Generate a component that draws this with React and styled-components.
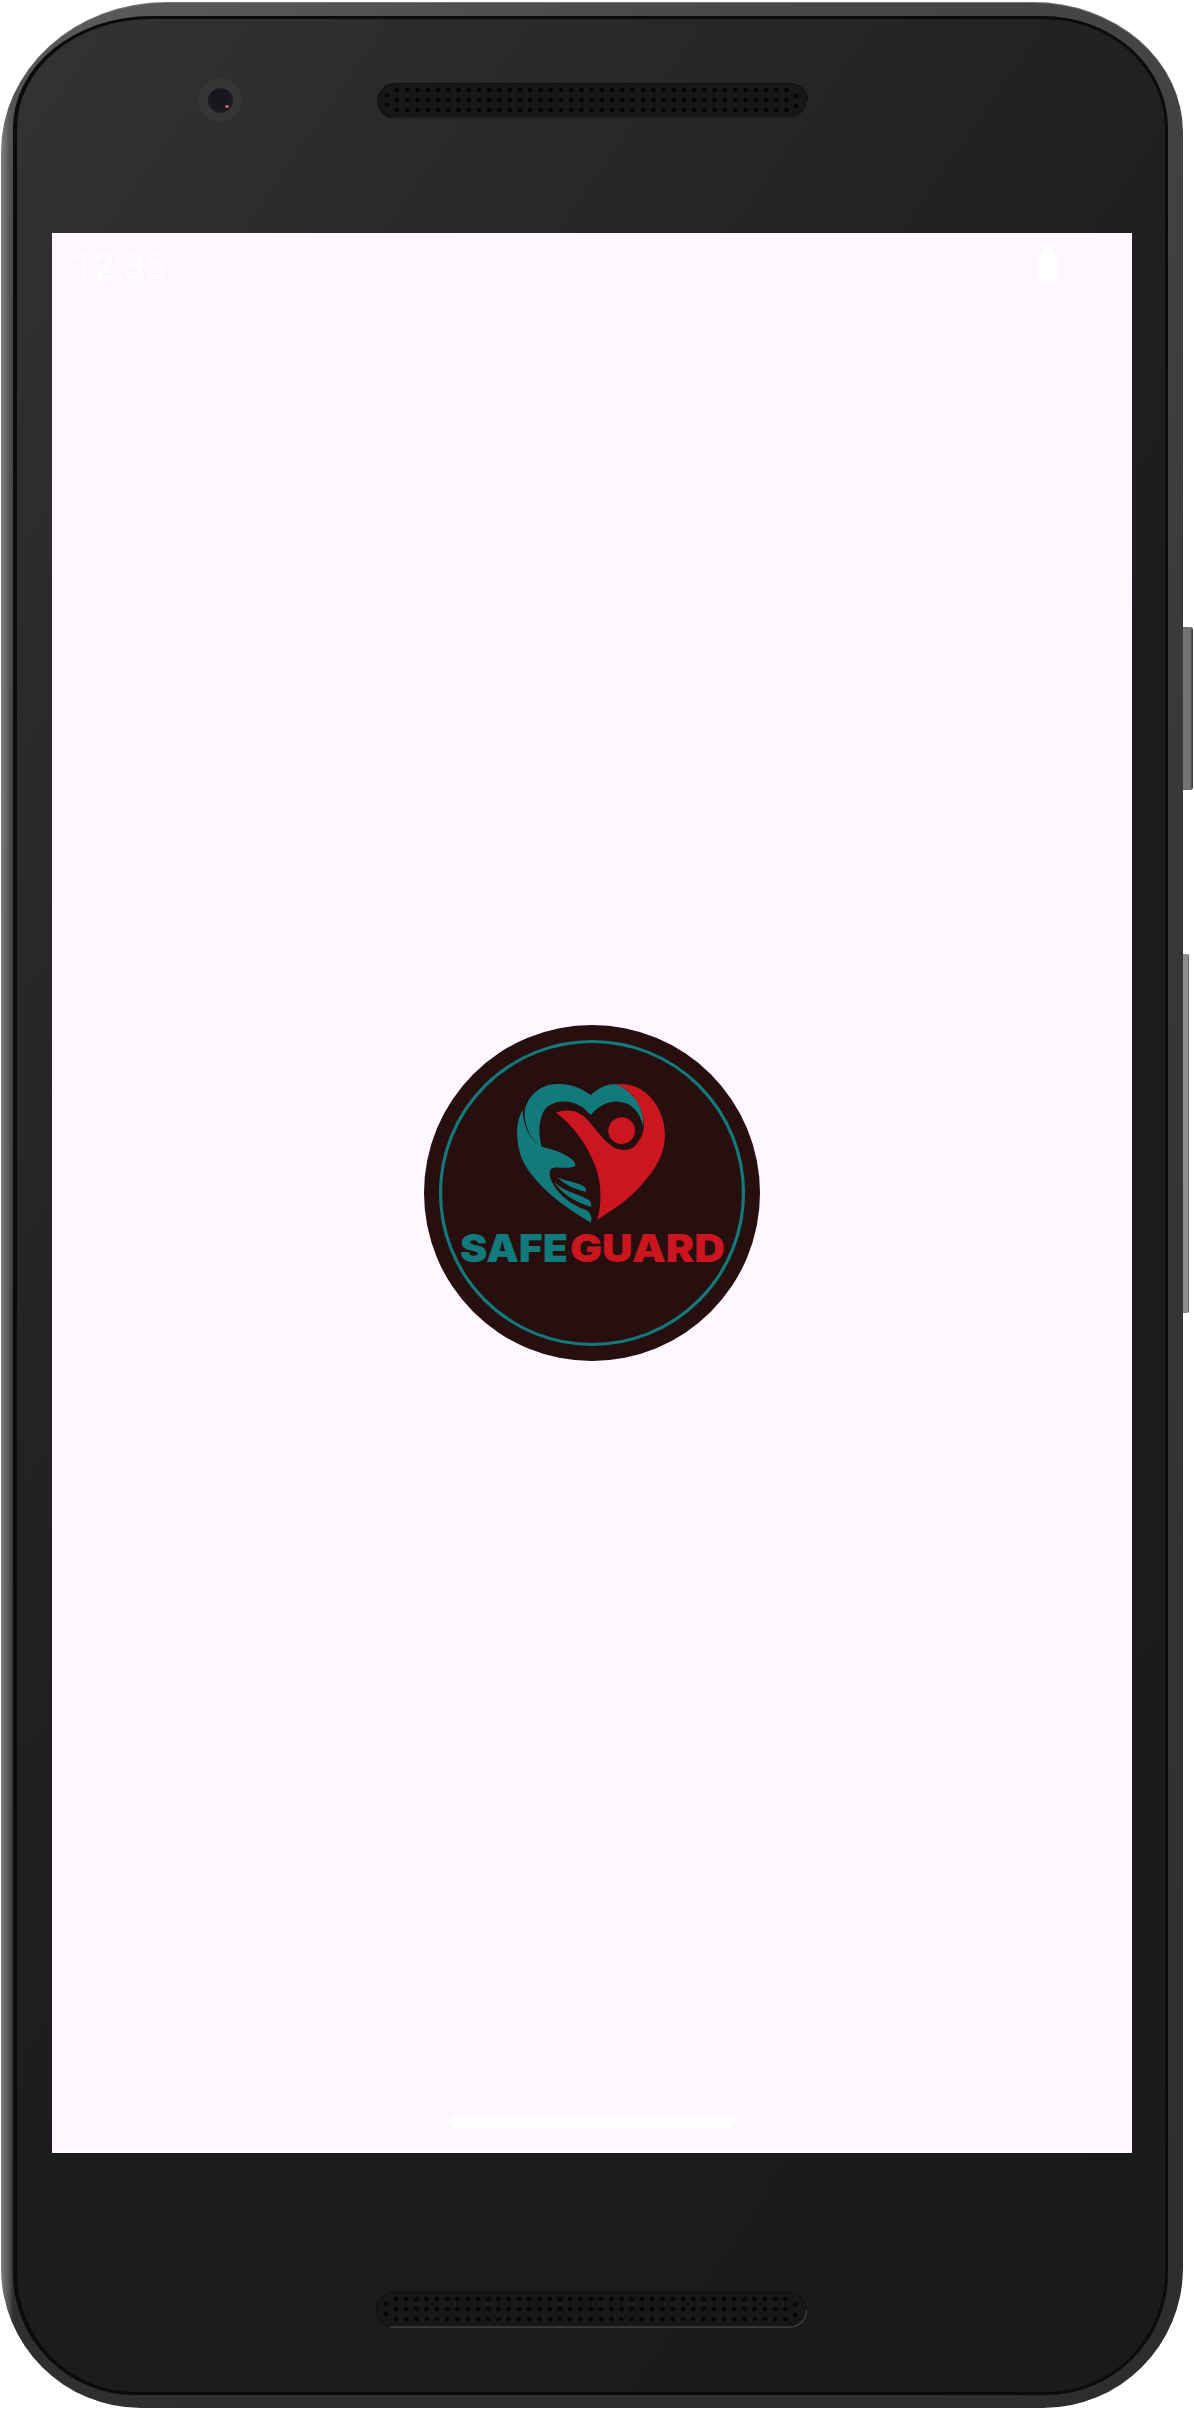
import React from 'react';
import styled, { createGlobalStyle } from 'styled-components';

const TEAL = '#127a7b';
const RED = '#cb1620';
const DARK = '#270f10';

const GlobalStyle = createGlobalStyle`
  html, body {
    margin: 0;
    padding: 0;
    background: #fff;
  }
`;

const Page = styled.div`
  width: 1194px;
  height: 2409px;
  overflow: hidden;
  padding: 2px 11px 1px 1px;
  box-sizing: border-box;
`;

const Phone = styled.div`
  position: relative;
  height: 100%;
`;

const Shell = styled.div`
  height: 100%;
  box-sizing: border-box;
  padding: 14px 15px 13px 12px;
  border-radius: 165px 150px 140px 140px / 150px 130px 140px 140px;
  background:
    linear-gradient(90deg, rgba(135, 135, 135, 0.9) 0, rgba(90, 90, 90, 0.8) 8px, transparent 12px),
    linear-gradient(165deg, #5e5e5e 0%, #464646 8%, #383838 40%, #2d2d2d 100%);
  box-shadow: inset 0 1px 0 #777;
`;

const Bezel = styled.div`
  height: 100%;
  box-sizing: border-box;
  display: flex;
  flex-direction: column;
  border: 3px solid #0b0b0b;
  border-left-width: 4px;
  border-radius: 138px 125px 122px 122px / 112px 112px 122px 122px;
  background: linear-gradient(125deg, #333 0%, #2a2a2a 18%, #212121 40%, #1c1c1c 55%, #1a1a1a 100%);
`;

const TopBar = styled.div`
  height: 214px;
  flex: none;
  box-sizing: border-box;
  display: flex;
  align-items: flex-start;
  gap: 135px;
  padding: 64px 0 0 181px;
`;

const BottomBar = styled.div`
  flex: 1;
  display: flex;
  justify-content: center;
  padding: 139px 0 0 0;
`;

const Camera = styled.div`
  width: 44px;
  height: 44px;
  flex: none;
  margin-top: -5px;
  border-radius: 50%;
  background: #363636;
  display: flex;
  align-items: center;
  justify-content: center;
`;

const Lens = styled.div`
  position: relative;
  width: 25px;
  height: 25px;
  border-radius: 50%;
  background: radial-gradient(circle at 45% 40%, #15131a 0%, #1c1a22 70%, #26242b 100%);

  &::after {
    content: '';
    position: absolute;
    right: 4px;
    bottom: 5px;
    width: 4px;
    height: 3px;
    border-radius: 50%;
    background: #b8666e;
  }
`;

const Screen = styled.div`
  height: 1920px;
  flex: none;
  margin: 0 33px 0 35px;
  background: #fef7ff;
  display: grid;
  grid-template-rows: 1fr auto 1fr;
  justify-items: center;
`;

const StatusBar = styled.div`
  justify-self: stretch;
  display: flex;
  align-items: flex-start;
  justify-content: space-between;
  padding: 12px 74px 0 21px;
`;

const Clock = styled.span`
  font-family: Roboto, 'Liberation Sans', sans-serif;
  font-size: 37px;
  line-height: 44px;
  color: #fff;
`;

const BatteryIcon = styled.svg`
  display: block;
  margin-top: 2px;
`;

const HomeIndicator = styled.div`
  align-self: end;
  width: 285px;
  height: 11px;
  margin-bottom: 26px;
  border-radius: 6px;
  background: #fff;
`;

const PowerButton = styled.div`
  position: absolute;
  left: 100%;
  top: 625px;
  width: 10px;
  height: 163px;
  border-radius: 0 3px 3px 0;
  background: linear-gradient(90deg, #727272 0 70%, #3a3a3a 100%);
`;

const VolumeButton = styled.div`
  position: absolute;
  left: 100%;
  top: 952px;
  width: 6px;
  height: 359px;
  border-radius: 0 2px 2px 0;
  background: linear-gradient(90deg, #8e8e8e 0 75%, #555 100%);
`;

const LogoText = styled.text`
  font-family: Inter, 'Liberation Sans', sans-serif;
  font-weight: 900;
  font-size: 39px;
`;

const COLUMNS = Array.from({ length: 39 }, (_, i) => 20 + i * 10.25);
const ROWS = [7, 17, 27];

function Speaker({ edge }) {
  return (
    <svg width="431" height="36" viewBox="0 0 431 36">
      <rect x="0.5" y="0.5" width="430" height="35" rx="17.5" fill="#171717" stroke="#0f0f0f" />
      <path d="M14 35.2H413A17 17 0 0 0 430.5 18" fill="none" stroke={edge} strokeWidth="1.2" />
      {COLUMNS.map(x =>
        ROWS.map(y => <circle key={`${x}-${y}`} cx={x} cy={y} r="2.3" fill="#050505" />)
      )}
      <circle cx="10" cy="12" r="2.3" fill="#050505" />
      <circle cx="10" cy="22" r="2.3" fill="#050505" />
      <circle cx="419" cy="13" r="2.3" fill="#050505" />
      <circle cx="419" cy="23" r="2.3" fill="#050505" />
    </svg>
  );
}

function Logo() {
  return (
    <svg width="336" height="336" viewBox="0 0 336 336" role="img" aria-label="Safeguard">
      <circle cx="168" cy="168" r="168" fill={DARK} />
      <circle cx="168" cy="168" r="151.5" fill="none" stroke={TEAL} strokeWidth="3.2" />
      <g transform="translate(76 45) scale(0.3333)">
        {/* top band of the heart */}
        <path
          fill={TEAL}
          d="M272 75C240 50 205 40 170 42C125 42 85 75 75 118C70 150 85 210 125 230C118 200 112 165 130 125C145 100 175 92 205 95C235 100 255 115 272 135C295 108 325 93 355 95C395 97 420 125 430 170C432 120 410 70 350 43C320 40 295 55 272 75Z"
        />
        {/* hand */}
        <path
          fill={TEAL}
          d="M68 120C50 150 45 190 60 250C80 320 170 400 273 458C277 440 272 428 258 420C215 405 165 370 150 320C148 305 150 296 160 293C180 290 215 298 226 287C230 275 205 250 130 232C90 215 70 170 68 120Z"
        />
        <path fill={TEAL} d="M162 335C190 365 240 372 270 392C273 398 274 404 274 411C230 398 185 372 162 335Z" />
        <path fill={TEAL} d="M172 322C200 335 240 338 255 352C258 357 258 361 258 366C225 358 195 345 172 322Z" />
        {/* person */}
        <path
          fill={RED}
          d="M168 128C190 118 225 118 245 135C270 150 295 195 325 220C350 245 395 250 415 215C430 195 435 170 430 150C425 105 400 65 350 43C420 35 480 90 493 170C505 250 460 310 400 370C365 405 320 430 292 450C305 400 305 350 290 300C270 235 220 165 168 128Z"
        />
        <circle cx="365" cy="182" r="40" fill={RED} />
      </g>
      <LogoText x="36" y="237" fill={TEAL} textLength="108" lengthAdjust="spacingAndGlyphs">
        SAFE
      </LogoText>
      <LogoText x="146" y="237" fill={RED} textLength="155" lengthAdjust="spacingAndGlyphs">
        GUARD
      </LogoText>
    </svg>
  );
}

export default function App() {
  return (
    <Page>
      <GlobalStyle />
      <Phone>
        <PowerButton />
        <VolumeButton />
        <Shell>
          <Bezel>
            <TopBar>
              <Camera>
                <Lens />
              </Camera>
              <Speaker edge="#2c2c2c" />
            </TopBar>
            <Screen>
              <StatusBar>
                <Clock>12:35</Clock>
                <BatteryIcon width="20" height="34" viewBox="0 0 20 34">
                  <path
                    fill="#fff"
                    d="M5 5V2a2 2 0 0 1 2-2h6a2 2 0 0 1 2 2v3h3a2 2 0 0 1 2 2v25a2 2 0 0 1-2 2H2a2 2 0 0 1-2-2V7a2 2 0 0 1 2-2z"
                  />
                </BatteryIcon>
              </StatusBar>
              <Logo />
              <HomeIndicator />
            </Screen>
            <BottomBar>
              <Speaker edge="#4a4a4a" />
            </BottomBar>
          </Bezel>
        </Shell>
      </Phone>
    </Page>
  );
}
